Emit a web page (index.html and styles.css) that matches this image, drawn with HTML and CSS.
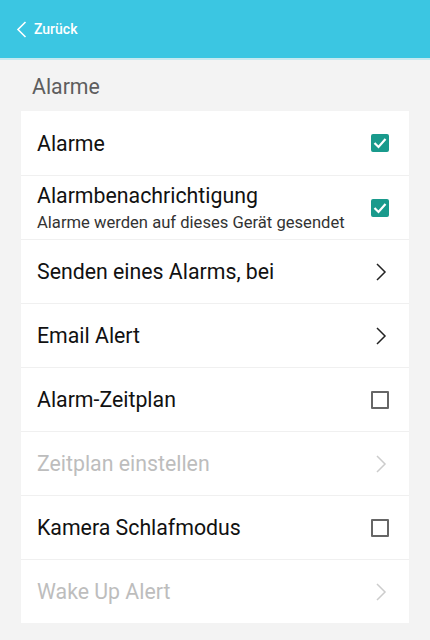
FILE: index.html
```html
<!DOCTYPE html>
<html lang="de">
<head>
    <meta charset="UTF-8">
    <meta name="viewport" content="width=device-width, initial-scale=1.0">
    <title>Alarme</title>
    <link rel="stylesheet" href="styles.css">
</head>
<body>
    <header class="topbar">
        <a class="back" href="#">
            <svg width="11" height="17" viewBox="0 0 11 17"><path d="M9.5 1 L2 8.5 L9.5 16" fill="none" stroke="#fff" stroke-width="1.6"/></svg>
            <span>Zurück</span>
        </a>
    </header>

    <h2 class="section-title">Alarme</h2>

    <div class="card">
        <div class="row">
            <span class="label">Alarme</span>
            <span class="check on"><svg width="14" height="12" viewBox="0 0 14 12"><path d="M1.5 6 L5.5 10 L12.5 2" fill="none" stroke="#fff" stroke-width="2.2"/></svg></span>
        </div>
        <div class="row">
            <div class="text">
                <span class="label">Alarmbenachrichtigung</span>
                <span class="sub">Alarme werden auf dieses Gerät gesendet</span>
            </div>
            <span class="check on"><svg width="14" height="12" viewBox="0 0 14 12"><path d="M1.5 6 L5.5 10 L12.5 2" fill="none" stroke="#fff" stroke-width="2.2"/></svg></span>
        </div>
        <div class="row">
            <span class="label">Senden eines Alarms, bei</span>
            <svg class="chev" width="12" height="18" viewBox="0 0 12 18"><path d="M2 1 L10 9 L2 17" fill="none" stroke="#222" stroke-width="1.5"/></svg>
        </div>
        <div class="row">
            <span class="label">Email Alert</span>
            <svg class="chev" width="12" height="18" viewBox="0 0 12 18"><path d="M2 1 L10 9 L2 17" fill="none" stroke="#222" stroke-width="1.5"/></svg>
        </div>
        <div class="row">
            <span class="label">Alarm-Zeitplan</span>
            <span class="check"></span>
        </div>
        <div class="row disabled">
            <span class="label">Zeitplan einstellen</span>
            <svg class="chev" width="12" height="18" viewBox="0 0 12 18"><path d="M2 1 L10 9 L2 17" fill="none" stroke="#ccc" stroke-width="1.5"/></svg>
        </div>
        <div class="row">
            <span class="label">Kamera Schlafmodus</span>
            <span class="check"></span>
        </div>
        <div class="row disabled">
            <span class="label">Wake Up Alert</span>
            <svg class="chev" width="12" height="18" viewBox="0 0 12 18"><path d="M2 1 L10 9 L2 17" fill="none" stroke="#ccc" stroke-width="1.5"/></svg>
        </div>
    </div>
</body>
</html>
```

FILE: styles.css
```css
* {
    margin: 0;
    padding: 0;
    box-sizing: border-box;
    font-family: 'Roboto', 'Liberation Sans', sans-serif;
}
body {
    background: #f3f3f3;
    width: 430px;
    height: 640px;
    overflow: hidden;
}
.topbar {
    height: 60px;
    background: #3bc6e2;
    border-bottom: 2px solid #c6e9f0;
    display: flex;
    align-items: center;
    padding-left: 16px;
}
.back {
    display: flex;
    align-items: center;
    gap: 7px;
    color: #fff;
    text-decoration: none;
    font-size: 14px;
    font-weight: 500;
}
.section-title {
    font-size: 21.3px;
    font-weight: 400;
    color: #5e5e5e;
    height: 51px;
    line-height: 54px;
    padding-left: 32px;
}
.card {
    background: #fff;
    margin: 0 21px;
}
.row {
    height: 64px;
    display: flex;
    align-items: center;
    justify-content: space-between;
    padding: 0 20px 0 16px;
    border-top: 1px solid #f0f0f0;
}
.row:first-child {
    border-top: none;
}
.label {
    font-size: 21.3px;
    color: #111;
}
.text {
    display: flex;
    flex-direction: column;
    line-height: 1.15;
    margin-top: 1px;
}
.sub {
    font-size: 16.6px;
    color: #333;
    margin-top: 4px;
}
.disabled .label {
    color: #bdbdbd;
}
.check {
    width: 18px;
    height: 18px;
    border: 2px solid #666;
    border-radius: 1px;
    display: flex;
    align-items: center;
    justify-content: center;
}
.check.on {
    background: #199a8c;
    border-color: #199a8c;
    border-radius: 2px;
}
.chev {
    margin-right: 2px;
}
```
